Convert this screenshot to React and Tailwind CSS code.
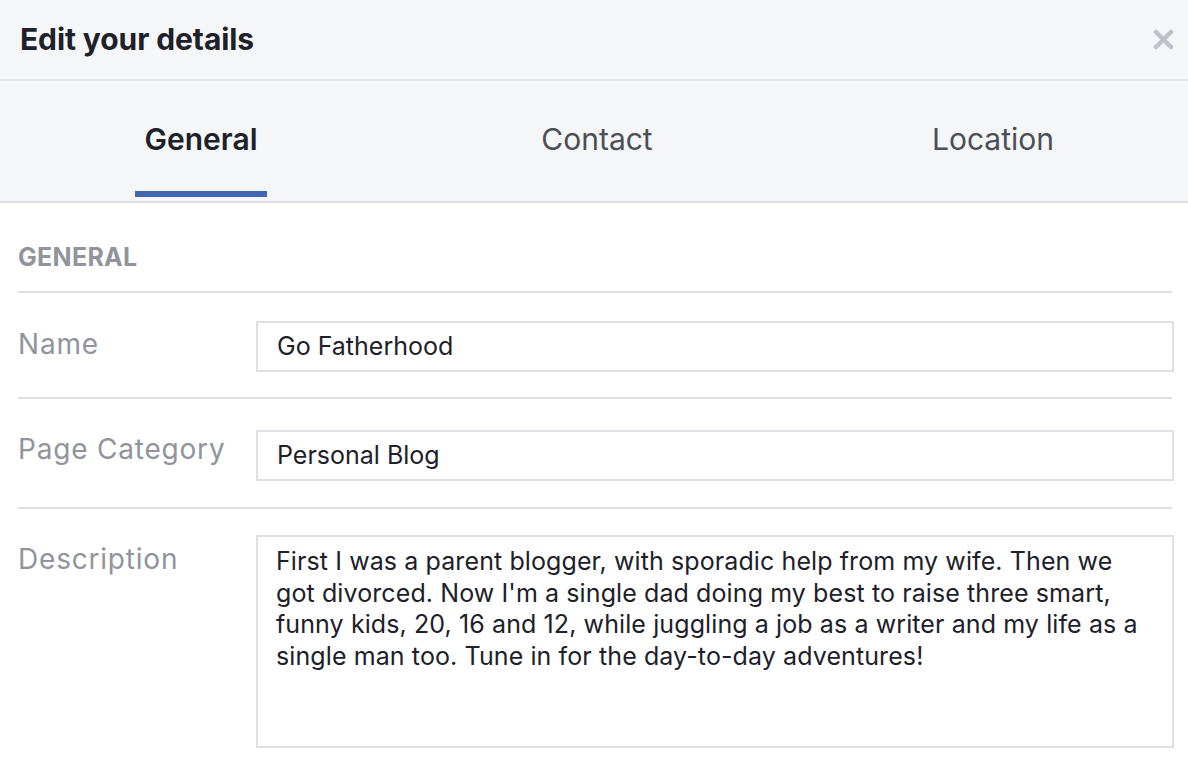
const tabs = ["General", "Contact", "Location"];

const descLines = [
  "First I was a parent blogger, with sporadic help from my wife. Then we",
  "got divorced. Now I'm a single dad doing my best to raise three smart,",
  "funny kids, 20, 16 and 12, while juggling a job as a writer and my life as a",
  "single man too. Tune in for the day-to-day adventures!",
];

const App = () => {
  return (
    <div className="w-[1188px] h-[766px] overflow-hidden bg-white font-['Inter',sans-serif]">
      <div className="h-[81px] pl-5 pr-[14px] flex items-center justify-between bg-[#f5f6f7] border-b-2 border-[#e5e6e9]">
        <h1 className="text-[30px] font-bold text-[#1d2129] tracking-[-0.1px]">Edit your details</h1>
        <svg width="21" height="21" viewBox="0 0 21 21">
          <path d="M3 3 L18 18 M18 3 L3 18" stroke="#bec3c9" strokeWidth="4.5" strokeLinecap="round" />
        </svg>
      </div>
      <div className="h-[122px] pl-[3px] grid grid-cols-[repeat(3,396px)] bg-[#f5f6f7] border-b-2 border-[#dddfe2]">
        {tabs.map((t, i) => (
          <div key={t} className="flex items-center justify-center">
            <div className="relative h-full flex items-center px-[9px] pb-[4px]">
              <span className={i === 0 ? "text-[30px] font-semibold text-[#1d2129]" : "text-[30px] text-[#4b4f56]"}>{t}</span>
              {i === 0 && <span className="absolute left-0 right-0 bottom-[4px] h-[6px] bg-[#4267b2]" />}
            </div>
          </div>
        ))}
      </div>
      <div className="pl-[18px] pr-[14px]">
        <div className="pt-[40px] pb-[20px] mr-[2px] border-b-2 border-[#dddfe2] text-[25px] leading-[28px] font-bold tracking-[0.3px] text-[#90949c]">GENERAL</div>
        <div className="flex pt-[28px] pb-[25px] mr-[2px] border-b-2 border-[#dddfe2]">
          <div className="w-[238px] pt-[7px] text-[28px] leading-[32px] tracking-[0.8px] text-[#90949c]">Name</div>
          <div className="flex-1 -mr-[2px] h-[51px] border-2 border-[#dddfe2] px-[19px] flex items-center text-[25px] text-[#1d2129]">Go Fatherhood</div>
        </div>
        <div className="flex pt-[31px] pb-[26px] mr-[2px] border-b-2 border-[#dddfe2]">
          <div className="w-[238px] pt-[3px] text-[28px] leading-[32px] tracking-[0.8px] text-[#90949c]">Page Category</div>
          <div className="flex-1 -mr-[2px] h-[51px] border-2 border-[#dddfe2] px-[19px] flex items-center text-[25px] text-[#1d2129]">Personal Blog</div>
        </div>
        <div className="flex pt-[26px]">
          <div className="w-[238px] pt-[8px] text-[28px] leading-[32px] tracking-[0.8px] text-[#90949c]">Description</div>
          <div className="flex-1 h-[213px] border-2 border-[#dddfe2] pl-[18px] pr-[10px] pt-[9px] text-[25px] leading-[31.5px] tracking-[0.1px] text-[#1d2129] whitespace-nowrap overflow-hidden">
            {descLines.map((l) => (
              <div key={l}>{l}</div>
            ))}
          </div>
        </div>
      </div>
    </div>
  );
};

export default App;
